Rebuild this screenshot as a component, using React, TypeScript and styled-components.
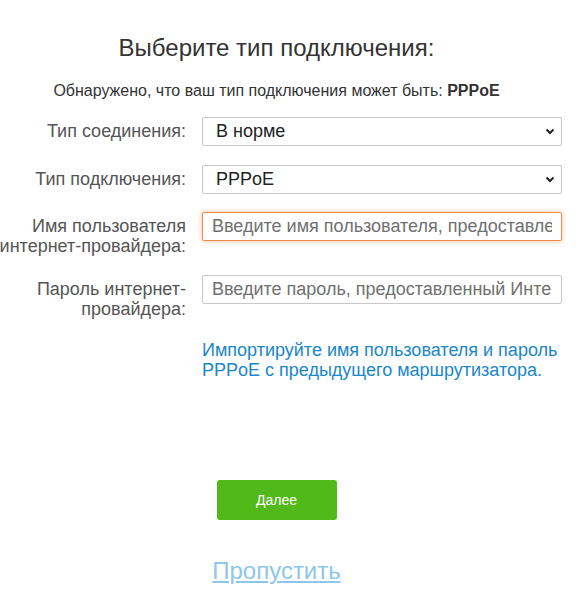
import React from "react";
import styled, { createGlobalStyle } from "styled-components";

const Global = createGlobalStyle`
  html, body { margin: 0; padding: 0; background: #fff; }
  body { font-family: "Liberation Sans", Arial, sans-serif; }
`;

const Page = styled.div`
  width: 553px;
  padding-top: 34px;
  display: flex;
  flex-direction: column;
  align-items: center;
`;

const Title = styled.h1`
  margin: 0;
  font-size: 24px;
  font-weight: normal;
  color: #333;
  line-height: 28px;
`;

const Detected = styled.p`
  margin: 19px 0 0;
  font-size: 16px;
  color: #333;
  line-height: 20px;
  b { font-weight: bold; }
`;

const Form = styled.div`
  align-self: flex-start;
  margin-top: 16px;
  display: grid;
  grid-template-columns: 186px 360px;
  column-gap: 16px;
  row-gap: 18.5px;
`;

const Label = styled.label`
  margin-left: -30px;
  text-align: right;
  white-space: nowrap;
  font-size: 18px;
  line-height: 20px;
  color: #555;
  padding-top: 4px;
`;

const fieldBase = `
  box-sizing: border-box;
  width: 360px;
  height: 29px;
  font-family: "Liberation Sans", Arial, sans-serif;
  font-size: 18px;
  border: 1px solid #c8c8c8;
  border-radius: 2px;
  background: #fff;
  outline: none;
`;

const SelectBox = styled.div`
  ${fieldBase}
  display: flex;
  align-items: center;
  justify-content: space-between;
  padding: 0 6px 0 13px;
  color: #222;
`;

const TextInput = styled.input<{ $focused?: boolean }>`
  ${fieldBase}
  padding: 0 9px;
  color: #333;
  border-color: ${(p) => (p.$focused ? "#ee8a44" : "#c8c8c8")};
  box-shadow: ${(p) => (p.$focused ? "0 0 5px rgba(238, 138, 68, 0.55)" : "none")};
  &::placeholder { color: #707070; }
`;

const ImportLink = styled.a`
  grid-column: 2;
  margin-top: 3px;
  font-size: 18px;
  line-height: 20px;
  color: #1a87c9;
  text-decoration: none;
`;

const NextButton = styled.button`
  margin-top: 100px;
  width: 120px;
  height: 40px;
  border: none;
  border-radius: 3px;
  background: #52b91a;
  color: #fff;
  font-family: "Liberation Sans", Arial, sans-serif;
  font-size: 14px;
`;

const SkipLink = styled.a`
  margin-top: 37px;
  font-size: 24px;
  color: #8ec6ec;
  text-decoration: underline;
  line-height: 28px;
`;

const Chevron = () => (
  <svg width="10" height="7" viewBox="0 0 10 7">
    <path d="M1.5 1.5 L5 5 L8.5 1.5" fill="none" stroke="#222" strokeWidth="2" />
  </svg>
);

const Select = ({ value }: { value: string }) => (
  <SelectBox>
    <span>{value}</span>
    <Chevron />
  </SelectBox>
);

export default function App() {
  return (
    <>
      <Global />
      <Page>
        <Title>Выберите тип подключения:</Title>
        <Detected>
          Обнаружено, что ваш тип подключения может быть: <b>PPPoE</b>
        </Detected>
        <Form>
          <Label>Тип соединения:</Label>
          <Select value="В норме" />
          <Label>Тип подключения:</Label>
          <Select value="PPPoE" />
          <Label>
            Имя пользователя
            <br />
            интернет-провайдера:
          </Label>
          <TextInput $focused placeholder="Введите имя пользователя, предоставленный Интернет-провайдером" />
          <Label>
            Пароль интернет-
            <br />
            провайдера:
          </Label>
          <TextInput placeholder="Введите пароль, предоставленный Интернет-провайдером" />
          <ImportLink href="#">
            Импортируйте имя пользователя и пароль
            <br />
            PPPoE с предыдущего маршрутизатора.
          </ImportLink>
        </Form>
        <NextButton>Далее</NextButton>
        <SkipLink href="#">Пропустить</SkipLink>
      </Page>
    </>
  );
}
